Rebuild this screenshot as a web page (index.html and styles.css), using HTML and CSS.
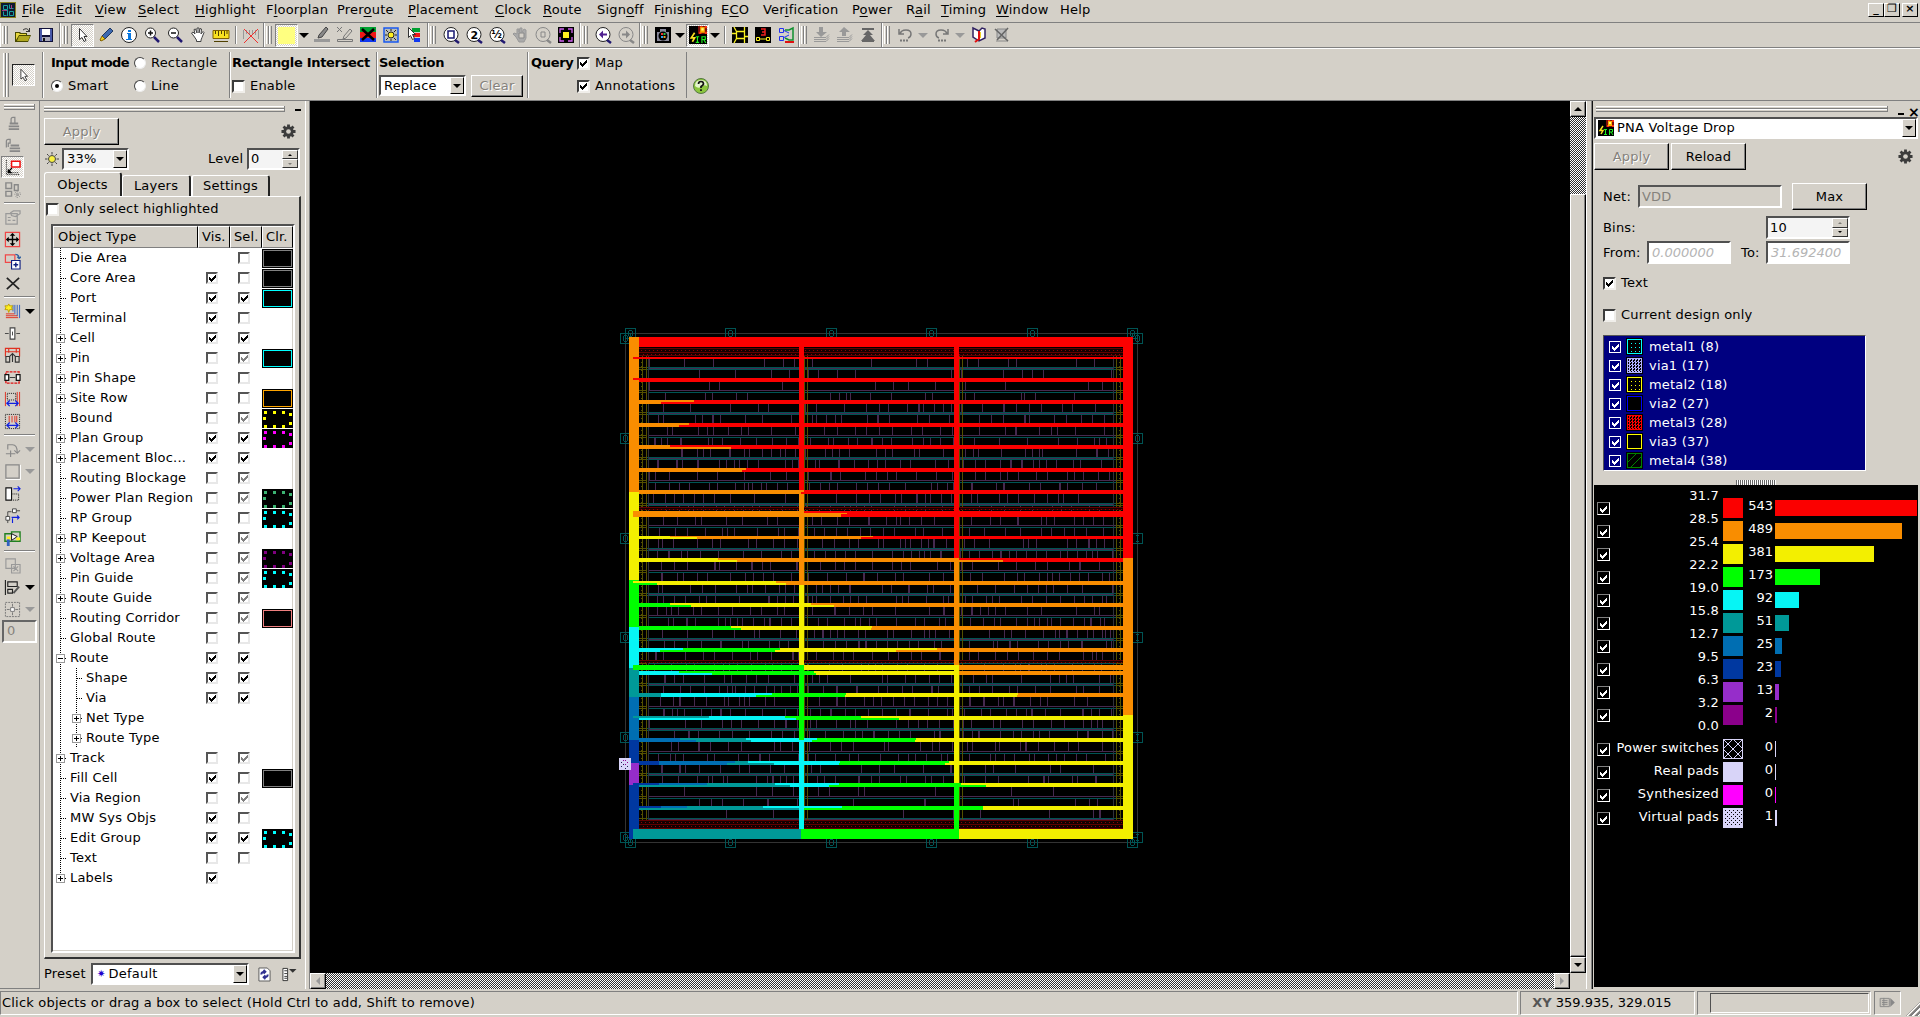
FILE: index.html
```html
<!DOCTYPE html>
<html lang="en">
<head>
<meta charset="utf-8">
<title>Layout Window</title>
<link rel="stylesheet" href="styles.css">
</head>
<body>
<svg class="sprite" width="0" height="0">
  <symbol id="app" viewBox="0 0 16 16"><path fill="#8a8420" d="M0 0h16v16H0z"/><path fill="#101830" d="M1 1h14v14H1z"/><path fill="none" stroke="#18a0a0" d="M3.500 3.500h4v4h-4zM9.500 2.500v4h4M9.500 9.500h4v4h-4zM3.500 9.500v4h3M7.500 8v6"/><path stroke="#a04080" d="M2 8.500h5M11.500 3v4"/></symbol>
  <symbol id="open" viewBox="0 0 18 18"><path fill="#4a4a00" d="M1 6h5l1 1h6v2h4l-3 7H1z"/><path fill="#e8d840" d="M2 7h3l1 1h6v1H5l-3 5z"/><path fill="#b0a820" d="M5 10h11l-2 5H3z"/><path fill="none" stroke="#333" d="M9 4q4-3 6 1M15.500 2v4M12 5.500h4"/></symbol>
  <symbol id="save" viewBox="0 0 18 18"><path fill="#111138" d="M2 2h14v14H2z"/><path fill="#4858a8" d="M3 3h2v12H3zM13 3h2v12h-2z"/><path fill="#fff" d="M5 3h8v6H5z"/><path fill="#a8a8b8" d="M5 11h8v4H5z"/><path fill="#111" d="M6 12h2v3H6z"/></symbol>
  <symbol id="cursor" viewBox="0 0 18 18"><path fill="#fff" stroke="#333" d="M5.500 2.500v11l2.500-2 2 4 2-1-2-4h3z"/></symbol>
  <symbol id="pencil" viewBox="0 0 18 18"><path fill="#3c68b0" stroke="#203860" d="M13 2l3 3-8 8-3-3z"/><path fill="#f0d020" stroke="#806000" d="M5 10l3 3-4 2-1-1z"/></symbol>
  <symbol id="info" viewBox="0 0 18 18"><circle cx="9" cy="9" r="7.500" fill="#fff" stroke="#222"/><path fill="#0878e0" d="M8 4h3v2H8zM7 7h4v6h1v1H6v-1h2V8H7z"/></symbol>
  <symbol id="zin" viewBox="0 0 18 18"><circle cx="7.500" cy="7" r="5" fill="#fff" stroke="#222"/><path stroke="#201870" stroke-width="2.500" d="M11 11l5 5"/><path stroke="#111" stroke-width="1.500" d="M5 7h5M7.500 4.500v5"/></symbol>
  <symbol id="zout" viewBox="0 0 18 18"><circle cx="7.500" cy="7" r="5" fill="#fff" stroke="#222"/><path stroke="#201870" stroke-width="2.500" d="M11 11l5 5"/><path stroke="#111" stroke-width="1.500" d="M5 7h5"/></symbol>
  <symbol id="hand" viewBox="0 0 18 18"><path fill="#fff" stroke="#444" d="M5.500 11l-3-4 1.500-1 2 2-1-4.500 1.500-.5 1.500 4V2h2v5l1-4.500 1.500.5-.5 5 2-2.500 1 1-2 5-1 2.500v1.500H7.500v-1.500z"/></symbol>
  <symbol id="ruler" viewBox="0 0 18 18"><path fill="#f8e020" stroke="#806000" d="M1 4.500h16v8H1z"/><path stroke="#504000" d="M3.500 5v3M6.500 5v5M9.500 5v3M12.500 5v5M15 5v3M2 15.500h14"/></symbol>
  <symbol id="noruler" viewBox="0 0 18 18"><path fill="none" stroke="#999" d="M1.500 13V4M4.500 4v4M7.500 4v5M10.500 4v4M13.500 4v5M16.500 4v9"/><path stroke="#f03030" d="M2 3l14 14M16 3L2 17"/></symbol>
  <symbol id="gpen" viewBox="0 0 18 18"><path fill="#888" stroke="#444" d="M13 1l2 2-6 8-4 1 1-3z"/><path fill="#999" d="M1 13h16v3H1z"/></symbol>
  <symbol id="xpen" viewBox="0 0 18 18"><path fill="none" stroke="#777" d="M14 3l2 2-6 7-3 1 1-3zM1.500 13.500h15v2h-15zM1 1l5 5M6 1L1 6"/></symbol>
  <symbol id="redx" viewBox="0 0 18 18"><path fill="#00a030" d="M1 1h16v5H1z"/><path fill="#f01818" d="M1 6h16v6H1z"/><path fill="#1038f0" d="M1 12h16v4H1z"/><path stroke="#000" stroke-width="2.500" d="M3 3l12 11M15 3L3 14"/></symbol>
  <symbol id="bluesun" viewBox="0 0 18 18"><path fill="#b8bcb8" stroke="#1858f0" stroke-width="1.500" d="M2 2h14v14H2z"/><circle cx="9" cy="9" r="3" fill="#fff020" stroke="#222"/><path stroke="#222" d="M9 3v2M9 13v2M3 9h2M13 9h2M4 4l2 2M12 12l2 2M14 4l-2 2M4 14l2-2"/></symbol>
  <symbol id="rgbcur" viewBox="0 0 18 18"><path fill="#00a030" d="M7 2h8v4H7z"/><path fill="#f01818" d="M8 7h7v4H8z"/><path fill="#1038f0" d="M9 12h6v4H9z"/><path fill="#fff" stroke="#333" d="M3.500 1.500v10l2-2 2 4 2-1-2-4h3z"/></symbol>
  <symbol id="camera" viewBox="0 0 18 18"><path d="M1 1h16v16H1z"/><path fill="#889" d="M3 6h12v9H3zM6 3h6v3H6z"/><circle cx="9" cy="10" r="4.500"/><path fill="#f03030" d="M7 7h2v2H7z"/><path fill="#30c040" d="M9.500 7h2v2h-2z"/><path fill="#30a0f0" d="M7 10h2v2H7z"/><path fill="#f0a020" d="M9.500 10h2v2h-2z"/></symbol>
  <symbol id="ir" viewBox="0 0 16 16"><path d="M0 0h16v16H0z"/><path fill="#801008" d="M8 0h8v7H8z"/><path fill="#f83010" d="M10 0h2v2h-2zM14 0h2v2h-2zM9 5h2v2H9zM14 5h2v2h-2z"/><path fill="#ffb000" d="M10 1h4v5h-4z"/><path fill="#ffff80" d="M11 2h2v2h-2z"/><path fill="none" stroke="#f8e020" stroke-width="1.500" d="M5 6L2 10.500h3L3 14"/><path fill="none" stroke="#20f020" d="M6 9.500h3M7.500 9v6M6 14.500h3M11.500 15V9.500h3v2.500h-3M13 12l2 3"/></symbol>
  <symbol id="ychip" viewBox="0 0 18 18"><path d="M1 1h16v16H1z"/><path fill="none" stroke="#f8f020" stroke-width="1.300" d="M5.500 5.500h8v7h-8zM5.500 5.500L3 1M13.500 5.500V1M5.500 12.500L3 17M13.500 12.500V17M1 7.500h4M14 10.500h3M8 5.500h4"/></symbol>
  <symbol id="three" viewBox="0 0 18 18"><path d="M1 1h16v16H1z"/><path fill="none" stroke="#f02020" stroke-width="1.500" d="M7 3h4v6H7M8 6h3"/><path fill="none" stroke="#f8f020" d="M2.500 11.500h3v3h-3zM12.500 11.500h3v3h-3zM6 13h6"/></symbol>
  <symbol id="schem" viewBox="0 0 18 18"><path fill="none" stroke="#2030f0" d="M2.500 2.500h4v4h-4zM2.500 10.500h4v4h-4zM6 4l6 3M6 12l6-3"/><path fill="none" stroke="#109030" stroke-width="1.500" d="M8 4h4l4-2v12h-4L8 12"/><path fill="#e01010" d="M8 15h9v2H8z"/></symbol>
  <symbol id="down" viewBox="0 0 18 18"><path fill="#999" d="M6 1h4v5h4L8 11 3 6h3z"/><path stroke="#999" fill="none" d="M1 11.500h12l3-3M1 13.500h12l3-3M1 15.500h12l3-3"/></symbol>
  <symbol id="up" viewBox="0 0 18 18"><path fill="#999" d="M6 10h4V6h4L8 1 3 6h3z"/><path stroke="#999" fill="none" d="M1 11.500h12l3-3M1 13.500h12l3-3M1 15.500h12l3-3"/></symbol>
  <symbol id="top" viewBox="0 0 18 18"><path fill="#666" d="M3 2h12v2H3zM9 4l5 5h-3l5 6H2l5-6H4zM3 14h12v2H3z"/></symbol>
  <symbol id="undo" viewBox="0 0 18 18"><path fill="none" stroke="#777" stroke-width="1.500" d="M4 8q1-4 6-4t5 4q0 3-3 4M3 3v5h5"/><path stroke="#777" stroke-width="2" stroke-dasharray="2 1" d="M4 14.500h9"/></symbol>
  <symbol id="redo" viewBox="0 0 18 18"><path fill="none" stroke="#777" stroke-width="1.500" d="M14 8q-1-4-6-4T3 8q0 3 3 4M15 3v5h-5"/><path stroke="#777" stroke-width="2" stroke-dasharray="2 1" d="M5 14.500h9"/></symbol>
  <symbol id="book" viewBox="0 0 18 18"><path fill="#fff" stroke="#302060" stroke-width="1.500" d="M9 5L3 2v9l6 4 6-3V3l-3-1z"/><path stroke="#e01010" stroke-width="2" fill="none" d="M9 5v9M5 16l4-3"/><path stroke="#f0d020" d="M10.500 6v6"/></symbol>
  <symbol id="nobook" viewBox="0 0 18 18"><path fill="#bbb" stroke="#888" d="M4 3h9v9H4zM3 15h12"/><path stroke="#666" stroke-width="1.600" d="M2 3l13 12M15 2L4 14"/></symbol>
  <symbol id="help" viewBox="0 0 16 16"><circle cx="8" cy="8" r="7.500" fill="#8cc63e" stroke="#557744"/><path fill="#e4f4cc" d="M2 8Q2 2 8 2t6 6q-3-2-6 1-3 2-6-1z"/><path fill="none" stroke="#111" stroke-width="1.700" d="M5.500 6q0-2.500 2.500-2.500T10.500 6Q10 7.500 8 8.500V10M8 11.200v1.800"/></symbol>
  <symbol id="gear" viewBox="0 0 16 16"><path stroke="#3c3c3c" stroke-width="3" d="M8 .5v15M.5 8h15M2.700 2.700l10.600 10.600M13.300 2.700L2.700 13.300"/><circle cx="8" cy="8" r="5.500" fill="#3c3c3c"/><circle cx="8" cy="8" r="2.500" fill="#d4d0c8"/></symbol>
  <symbol id="sun" viewBox="0 0 16 16"><circle cx="8" cy="8" r="3.500" fill="#f8f040" stroke="#444"/><path stroke="#444" d="M8 1v2.500M8 12.500V15M1 8h2.500M12.500 8H15M3 3l1.700 1.700M11.300 11.300L13 13M13 3l-1.700 1.700M3 13l1.700-1.700"/></symbol>
  <symbol id="lock" viewBox="0 0 18 18"><path fill="none" stroke="#888" stroke-width="1.300" d="M7.500 9V4.500q0-2 2-2h2v6"/><path fill="#888" d="M6 8h9v2H6zM5 11h11v2H5zM5 14h11v2H5z"/></symbol>
  <symbol id="unlock" viewBox="0 0 18 18"><path fill="none" stroke="#888" stroke-width="1.300" d="M2.500 11V4.500q0-2 2-2h2v4h-2v4"/><path fill="#888" d="M7 8h9v2H7zM6 11h11v2H6zM6 14h11v2H6z"/></symbol>
  <symbol id="redrect" viewBox="0 0 18 18"><path fill="#fff" stroke="#f01010" stroke-width="1.600" d="M8 2.500h9v6H8z"/><path d="M4 10v5h5z"/><path stroke="#000" stroke-width="1.300" d="M4 14l4.500-4.500"/><path fill="none" stroke="#000" stroke-dasharray="1 1" d="M2.500 1v15.500H17M4 14.500h12"/></symbol>
  <symbol id="boxes" viewBox="0 0 18 18"><path fill="none" stroke="#888" stroke-width="1.500" d="M2 2h6v6H2zM2 11h6v5H2zM11 4h4v6h-4z"/><path stroke="#888" stroke-dasharray="1 1" d="M11 14h7M14 11v7M12 12l5 5M17 12l-5 5"/></symbol>
  <symbol id="props" viewBox="0 0 18 18"><path fill="none" stroke="#999" stroke-width="1.300" d="M2 5h12v11H2zM4 9h3M4 12h3M9 12h3M7 4l3-2h7v3l-5 3-4-1z"/></symbol>
  <symbol id="move" viewBox="0 0 18 18"><path fill="none" stroke="#f04848" stroke-width="1.300" d="M1.500 1.500h15v15h-15z"/><path d="M9 2l3 3H6zM9 16l3-3H6zM2 9l3-3v6zM16 9l-3-3v6z"/><path stroke="#000" stroke-width="1.500" d="M9 3v12M3 9h12"/></symbol>
  <symbol id="copy" viewBox="0 0 18 18"><path fill="none" stroke="#f04848" stroke-width="1.300" d="M1.500 2h10v8h-10z"/><path fill="none" stroke="#3060a0" stroke-width="1.300" d="M12 1.500q4 0 4 4.500M14 4l2 2 2-2"/><path fill="#fff" stroke="#102080" stroke-width="1.200" d="M8 8h9v9H8z"/><path stroke="#102080" stroke-width="1.500" d="M10 12.500h5M12.500 10v5"/></symbol>
  <symbol id="del" viewBox="0 0 18 18"><path stroke="#222" stroke-width="1.800" d="M3 3l13 12M16 3L3 15"/></symbol>
  <symbol id="routes" viewBox="0 0 18 18"><path fill="none" stroke="#3060c0" d="M16.500 2v14M14 2v12M11.500 2v10M9.500 2v7"/><path fill="none" stroke="#e03020" d="M2 11.500h9M2 13.500h12M2 15.500h13"/><path fill="#fff020" stroke="#c0a000" d="M5 1l1 2 3 0-1 2 1 2-3 0-1 3-1-3-3 0 1-2-1-2 3 0z"/></symbol>
  <symbol id="stretch" viewBox="0 0 18 18"><path fill="#fff" stroke="#444" stroke-width="1.200" d="M6.500 3h5v12h-5z"/><path stroke="#444" fill="none" d="M1 9h4M13 9h4M9 7v4"/></symbol>
  <symbol id="arch" viewBox="0 0 18 18"><path fill="none" stroke="#e03020" stroke-width="1.200" d="M1.500 10V1.500h15V10M1 5h16M5 1v5M13 1v5"/><path fill="none" stroke="#333" stroke-width="1.200" d="M2 10h4v6H2zM12 10h4v6h-4zM9 16V8M6 10l3-3 3 3"/></symbol>
  <symbol id="pull" viewBox="0 0 18 18"><path fill="none" stroke="#e01010" stroke-width="1.400" stroke-dasharray="3 1" d="M2 3h14v12H2z"/><path fill="#fff" stroke="#111" stroke-width="1.300" d="M1 6h4v6H1zM13 6h4v6h-4z"/><path stroke="#333" d="M6 9h6"/></symbol>
  <symbol id="widthb" viewBox="0 0 18 18"><path stroke="#e03020" d="M1.500 1v15M14 1v15M16.500 1v15"/><path fill="none" stroke="#111" stroke-dasharray="1 1" d="M3.500 2.500h9v7h-9z"/><path fill="none" stroke="#1020e0" stroke-width="1.300" d="M3 13h12M6 10l-3 3 3 3M12 10l3 3-3 3"/></symbol>
  <symbol id="widthr" viewBox="0 0 18 18"><path stroke="#e03020" d="M5.500 3v7M8.500 3v7M11.500 3v7M13.500 3v7"/><path fill="none" stroke="#111" stroke-dasharray="1 1" d="M1.500 1.500h15v15h-15z"/><path fill="none" stroke="#1020e0" stroke-width="1.300" d="M3 13h12M6 10l-3 3 3 3M12 10l3 3-3 3"/></symbol>
  <symbol id="rot" viewBox="0 0 18 18"><path fill="none" stroke="#888" stroke-width="1.200" d="M4 9V4h5q5 0 5 8M11 10l3 3 3-3M2 13.500h10M7 10v7"/></symbol>
  <symbol id="blank" viewBox="0 0 18 18"><path fill="none" stroke="#888" stroke-width="1.300" d="M2 2h14v14H2z"/><path fill="none" stroke="#fff" d="M17.500 2v15.500H2"/></symbol>
  <symbol id="shift" viewBox="0 0 18 18"><path fill="#fff" stroke="#111" stroke-width="1.200" d="M2 3h6v13H2z"/><path fill="none" stroke="#111" stroke-dasharray="1 1" d="M9 9.500h6.500v6.500H9"/><path fill="none" stroke="#1020e0" stroke-width="1.200" d="M10 4h7M14.500 1.500L17 4l-2.500 2.500"/></symbol>
  <symbol id="pins" viewBox="0 0 18 18"><path fill="#fff" stroke="#444" d="M2 10h4v4H2zM9 2h4v4H9z"/><path fill="none" stroke="#444" d="M4 10V5h4M13 4h4M4 14v3"/><path fill="none" stroke="#1020e0" stroke-width="1.200" d="M8 11h8M14 9l2 2-2 2M9 17v-5"/></symbol>
  <symbol id="net" viewBox="0 0 18 18"><path fill="none" stroke="#208020" stroke-width="1.500" d="M1 5h7V3h9v10H1z"/><path fill="#fff" stroke="#111" d="M8 5l6 3-6 4z"/><path fill="#fff020" d="M3 8h4v3H3zM13 9h4v3h-4z"/><path fill="#3060c0" d="M3 11h3v7H3z"/></symbol>
  <symbol id="group" viewBox="0 0 18 18"><path fill="none" stroke="#999" stroke-width="1.200" d="M2 2h10v10H2zM8 8h9v9H8zM10 10l5 5M15 10l-5 5"/></symbol>
  <symbol id="align" viewBox="0 0 18 18"><path fill="none" stroke="#222" stroke-width="1.200" d="M1.500 1v16M4 3h10v5H4zM4 11h5v4H4z"/><path fill="none" stroke="#555" stroke-width="2" d="M10 15l6-7"/></symbol>
  <symbol id="spread" viewBox="0 0 18 18"><path fill="none" stroke="#777" stroke-dasharray="2 1" d="M1.500 1.500h15v15h-15z"/><path fill="#fff" stroke="#777" d="M7 7h4v4H7z"/><path stroke="#777" d="M9 3v3M9 12v3M3 9h3M12 9h3"/></symbol>
  <symbol id="fit" viewBox="0 0 18 18"><path d="M1 1h16v16H1z"/><path fill="#fff020" d="M6 6h6v6H6z"/><path fill="none" stroke="#d060f0" stroke-width="1.300" d="M3 7V3h4M11 3h4v4M15 11v4h-4M7 15H3v-4"/></symbol>
  <symbol id="refresh" viewBox="0 0 14 16"><path fill="#fff" stroke="#555" d="M1 1h9l3 3v11H1z"/><path fill="none" stroke="#303090" stroke-width="2" d="M3.500 8q0-3 4-3M10.500 8q0 3-4 3M6 3l2 2-2 2M8 9l-2 2 2 2"/></symbol>
  <symbol id="preset" viewBox="0 0 16 16"><path fill="#fff" stroke="#333" d="M1.500 1.500h5v13h-5zM3 4h3M3 7h3M3 10h3M3 12h3"/><path fill="#333" d="M8 2h8l-4 4z"/></symbol>
  <symbol id="go" viewBox="0 0 18 12"><path fill="#c8c4bc" stroke="#888" d="M1 1.500h10v9H1zM3 4h6M3 6h6M3 8h6M5 1v9"/><path fill="#888" d="M12 1l5 5-5 5z"/></symbol>
</svg>

<div class="window">
  <nav class="menubar">
    <svg class="app-icon"><use href="#app"/></svg>
    <span><u>F</u>ile</span><span><u>E</u>dit</span><span><u>V</u>iew</span><span><u>S</u>elect</span><span><u>H</u>ighlight</span><span>F<u>l</u>oorplan</span><span>Prer<u>o</u>ute</span><span><u>P</u>lacement</span><span><u>C</u>lock</span><span><u>R</u>oute</span><span>Sign<u>o</u>ff</span><span>F<u>i</u>nishing</span><span>E<u>C</u>O</span><span>Ver<u>i</u>fication</span><span>P<u>o</u>wer</span><span>R<u>a</u>il</span><span><u>T</u>iming</span><span><u>W</u>indow</span><span>Help</span>
    <div class="wm"><b>_</b><b>❐</b><b>×</b></div>
  </nav>

  <div class="toolbars" id="toolbars"></div>

  <div class="options">
    <div class="grip-v tall"></div>
    <div class="mode-btn hatch"><svg><use href="#cursor"/></svg></div>
    <div class="opt-group g-mode">
      <b>Input mode</b><label><i class="radio"></i>Rectangle</label>
      <label><i class="radio on"></i>Smart</label><label><i class="radio"></i>Line</label>
    </div>
    <div class="opt-group g-rect">
      <b>Rectangle Intersect</b>
      <label><i class="cb"></i>Enable</label>
    </div>
    <div class="opt-group g-sel">
      <b>Selection</b>
      <div class="sel-row"><div class="combo"><span>Replace</span><i class="drop"></i></div><div class="btn off">Clear</div></div>
    </div>
    <div class="opt-group g-query">
      <b>Query</b><label><i class="cb on"></i>Map</label>
      <span></span><label><i class="cb on"></i>Annotations</label>
    </div>
    <svg class="help"><use href="#help"/></svg>
  </div>

  <div class="main">
    <div class="side-tools" id="side"></div>

    <section class="objects">
      <div class="dock-head"><div class="grip-h"></div><b class="min"></b></div>
      <div class="apply-row"><div class="btn off">Apply</div><svg class="gear"><use href="#gear"/></svg></div>
      <div class="level-row">
        <svg class="sun"><use href="#sun"/></svg>
        <div class="combo dim"><span>33%</span><i class="drop"></i></div>
        <span class="lvl">Level</span>
        <div class="spin"><span>0</span><div class="arrows"><i></i><i class="dis"></i></div></div>
      </div>
      <div class="tabs"><div class="tab on">Objects</div><div class="tab">Layers</div><div class="tab t3">Settings</div></div>
      <div class="tab-page">
        <label class="only"><i class="cb"></i>Only select highlighted</label>
        <div class="tree">
          <div class="tree-head"><span>Object Type</span><span>Vis.</span><span>Sel.</span><span>Clr.</span></div>
          <div id="tree"></div>
        </div>
      </div>
      <div class="preset-row">
        <span>Preset</span>
        <div class="combo"><em>✷</em><span>Default</span><i class="drop"></i></div>
        <svg class="ref"><use href="#refresh"/></svg><svg class="pre"><use href="#preset"/></svg>
      </div>
    </section>

    <section class="view">
      <svg class="canvas" id="chip" viewBox="310 101 1260 872" shape-rendering="crispEdges"></svg>
      <div class="vscroll hatch-d"><div class="sb up"></div><div class="thumb"></div><div class="sb dn"></div></div>
      <div class="hscroll hatch-d"><div class="sb lf"></div><div class="sb rt"></div></div>
      <div class="corner"></div>
    </section>

    <section class="pna">
      <div class="dock-head"><div class="grip-h"></div><b class="min"></b><b class="cls">×</b></div>
      <div class="combo map-combo"><svg><use href="#ir"/></svg><span>PNA Voltage Drop</span><i class="drop"></i></div>
      <div class="btn-row"><div class="btn off">Apply</div><div class="btn">Reload</div><svg class="gear"><use href="#gear"/></svg></div>
      <div class="form">
        <div class="row net"><span>Net:</span><div class="field off">VDD</div><div class="btn">Max</div></div>
        <div class="row bins"><span>Bins:</span><div class="spin"><span>10</span><div class="arrows"><i class="dis"></i><i></i></div></div></div>
        <div class="row range"><span>From:</span><div class="field ghost">0.000000</div><span class="to">To:</span><div class="field ghost">31.692400</div></div>
        <label class="ck1"><i class="cb on"></i>Text</label>
        <label class="ck2"><i class="cb"></i>Current design only</label>
        <div class="layers" id="layers"></div>
      </div>
      <div class="split"></div>
      <div class="hist" id="hist"></div>
    </section>
  </div>

  <footer class="status">
    <div class="msg">Click objects or drag a box to select (Hold Ctrl to add, Shift to remove)</div>
    <div class="xy"><b>XY</b> 359.935, 329.015</div>
    <div class="prog"><div></div></div>
    <div class="gobtn"><svg><use href="#go"/></svg></div>
    <div class="sizegrip"></div>
  </footer>
</div>
<script src="app.js"></script>
</body>
</html>
```
FILE: styles.css
```css
* { box-sizing: border-box; }
body { margin: 0; background: #d4d0c8; color: #000; font: 13px/16px "DejaVu Sans", sans-serif; letter-spacing: .2px; overflow: hidden; }
svg { display: block; flex: none; overflow: visible; }
.sprite { position: absolute; }
.window { width: 1920px; height: 1017px; display: flex; flex-direction: column; white-space: nowrap; }

.menubar { height: 22px; display: grid; align-items: center; grid-template-columns: 22px 34px 39px 43px 57px 71px 71px 71px 87px 48px 54px 57px 67px 42px 89px 54px 35px 55px 64px 1fr auto; padding-bottom: 2px; }
.menubar u { text-underline-offset: 2px; text-decoration-thickness: 1px; }
.app-icon { width: 16px; height: 16px; }
.wm { display: flex; padding-right: 2px; }
.wm b { width: 16px; height: 14px; font-size: 11px; line-height: 10px; text-align: center; border: 1px solid; border-color: #fff #000 #000 #fff; }
.wm b:last-child { margin-left: 2px; }

.toolbars { height: 26px; display: flex; border-top: 1px solid #808080; border-bottom: 1px solid #808080; }
.bar { display: flex; align-items: center; border-right: 1px solid #808080; border-left: 1px solid #fff; flex: none; }
.bar:last-child { border-right: 0; }
.grip-v { width: 6px; height: 18px; flex: none; margin: 0 3px 0 1px; background: linear-gradient(90deg, #fff 1px, #d4d0c8 1px 2px, #808080 2px 3px, #fff 3px 4px, #d4d0c8 4px 5px, #808080 5px); }
.tool { width: 23px; height: 23px; display: grid; place-items: center; flex: none; }
.tool svg { width: 18px; height: 18px; }
.tool.pressed { border: 1px solid; border-color: #808080 #fff #fff #808080; }
.hatch, .tool.pressed { background: repeating-conic-gradient(#fff 0 25%, #d4d0c8 0 50%) 0 0 / 2px 2px; }
.swatch { width: 17px; height: 17px; background: #ffff80; }
.arrow { width: 12px; display: grid; place-items: center; flex: none; }
.arrow::before { content: ""; border: 5px solid transparent; border-top-color: #000; border-bottom: 0; }
.arrow.dis::before { border-top-color: #999; }
.arrow.wide { width: 14px; }
.vsep { width: 7px; height: 18px; flex: none; background: linear-gradient(90deg, transparent 3px, #808080 3px 4px, #fff 4px 5px, transparent 5px); }

.options { height: 53px; display: flex; align-items: center; border-top: 1px solid #fff; border-bottom: 1px solid #808080; padding-left: 2px; }
.grip-v.tall { height: 44px; }
.mode-btn { width: 23px; height: 22px; border: 1px solid; border-color: #222 #fff #fff #222; display: grid; place-items: center; }
.mode-btn svg { width: 16px; height: 16px; }
.opt-group { height: 46px; display: grid; grid-template-rows: 23px 23px; align-items: center; border-left: 1px solid #808080; box-shadow: inset 1px 0 #fff; padding-left: 3px; }
.opt-group b { letter-spacing: -.32px; }
.opt-group.g-mode b { letter-spacing: -.6px; }
.g-mode { margin-left: 7px; padding-left: 8px; width: 187px; grid-template-columns: 83px 1fr; }
.opt-group.g-rect { width: 147px; padding-left: 2px; }
.opt-group.g-sel { width: 151px; padding-left: 2px; }
.g-query { width: 160px; grid-template-columns: 46px 1fr; border-right: 1px solid #808080; }
.sel-row { display: flex; gap: 5px; }
.sel-row .combo { width: 87px; height: 21px; }
.sel-row .btn { width: 52px; height: 22px; }
.help { width: 16px; height: 16px; margin: 22px 0 0 6px; }
label { display: flex; align-items: center; gap: 5px; }
.radio { width: 12px; height: 12px; border-radius: 50%; background: #fff; border: 1.500px solid; border-color: #444 #eee #eee #444; display: grid; place-items: center; }
.radio.on::before { content: ""; width: 4px; height: 4px; border-radius: 50%; background: #000; }
.cb { width: 13px; height: 13px; flex: none; background: #fff; border: 2px solid; border-color: #3c3c3c #f0eeea #f0eeea #3c3c3c; display: grid; place-items: center; }
.cb svg, .list-cb svg { width: 9px; height: 8px; }

.btn { display: grid; place-items: center; border: 1px solid; border-color: #fff #000 #000 #fff; box-shadow: inset -1px -1px #808080; }
.btn.off, .off { color: #85827c; }
.btn.off { text-shadow: 1px 1px #fff; }
.combo, .field, .spin { display: flex; align-items: center; background: #fff; border: 2px solid; border-color: #505050 #fff #fff #505050; }
.combo span { flex: 1; padding-left: 3px; }
.drop { width: 14px; align-self: stretch; background: #d4d0c8; border: 1px solid; border-color: #fff #000 #000 #fff; display: grid; place-items: center; }
.drop::before { content: ""; border: 4px solid transparent; border-top-color: #000; border-bottom: 0; }
.combo.dim, .spin { background: #f4f4f4; }
.spin { justify-content: space-between; padding-left: 3px; }
.arrows { width: 16px; align-self: stretch; display: flex; flex-direction: column; }
.arrows i { flex: 1; background: #d4d0c8; border: 1px solid; border-color: #fff #333 #333 #fff; display: grid; place-items: center; }
.arrows i::before { content: ""; border: 2px solid transparent; border-bottom-color: #000; border-top: 0; }
.arrows i + i::before { border-top: 2px solid #000; border-bottom: 0; }
.arrows .dis::before { opacity: .4; }

.main { height: 888px; display: flex; }
.main > * { flex: none; }
.side-tools { width: 40px; border-right: 1px solid #808080; border-bottom: 1px solid #808080; padding-top: 3px; }
.grip-h { height: 6px; flex: 1; background: linear-gradient(#fff 1px, #d4d0c8 1px 2px, #808080 2px 3px, #fff 3px 4px, #d4d0c8 4px 5px, #808080 5px); border-right: 1px solid #808080; }
.side-tools .grip-h { margin: 0 4px 2px; }
.st-row { height: 22px; display: flex; align-items: center; padding-left: 1px; }
.st-row .tool { height: 22px; }
.st-row .tool svg { width: 17px; height: 17px; }
.hsep { height: 2px; margin: 2px 4px; background: linear-gradient(#808080 50%, #fff 50%); }
.side-in { width: 35px; height: 23px; margin: 0 0 0 2px; border: 2px solid; border-color: #666 #fff #fff #666; padding: 1px 3px; color: #85827c; }

.objects { width: 270px; padding: 0 0 0 4px; border-right: 1px solid #808080; display: flex; flex-direction: column; box-shadow: inset -3px 0 #d4d0c8, inset -4px 0 #fff; }
.dock-head { height: 17px; display: flex; align-items: flex-start; padding-top: 5px; }
.dock-head .min { width: 6px; height: 2px; background: #000; margin: 3px 8px 0 10px; }
.objects .grip-h { flex: 0 0 241px; }
.apply-row { height: 30px; display: flex; justify-content: space-between; padding-right: 13px; }
.apply-row .btn, .btn-row .btn { width: 75px; height: 27px; }
.gear { width: 15px; height: 15px; margin-top: 6px; }
.level-row { height: 22px; display: flex; align-items: center; }
.sun { width: 16px; height: 16px; margin-right: 2px; }
.level-row .combo { width: 67px; height: 22px; }
.lvl { margin-left: 79px; width: 39px; }
.level-row .spin { width: 53px; height: 22px; padding-left: 2px; }
.tabs { height: 25px; display: flex; align-items: flex-end; margin-top: 1px; }
.tab { height: 21px; border: solid; border-width: 1px 2px 0 1px; border-color: #fff #222 #222 #fff; border-radius: 3px 3px 0 0; width: 69px; display: grid; place-items: center; }
.tab.on { height: 25px; width: 78px; margin-bottom: -1px; background: #d4d0c8; }
.tab.t3 { width: 79px; border-left-width: 2px; }
.tab-page { width: 257px; height: 763px; border: solid; border-width: 1px 2px 2px 1px; border-color: #fff #333 #333 #fff; padding: 5px 0 0 1px; }
.only { height: 14px; }
.tree { margin: 8px 0 0 5px; width: 244px; height: 729px; background: #fff; border: 2px solid; border-color: #505050 #fff #fff #505050; box-shadow: inset -1px -1px #d4d0c8; }
.tree-head { display: grid; grid-template-columns: 145px 32px 32px 31px; height: 22px; background: #d4d0c8; }
.tree-head span { border: 1px solid; border-color: #fff #000 #808080 #fff; padding: 2px 0 0 3px; overflow: hidden; letter-spacing: .1px; }
.tree-head span:first-child { padding-left: 4px; letter-spacing: .2px; }
.node { height: 20px; display: grid; grid-template-columns: 145px 32px 32px 31px; position: relative; align-items: center; }
.node .name { padding-left: 17px; height: 20px; line-height: 19px; background: repeating-linear-gradient(#000 0 1px, transparent 1px 2px) 7px 0 / 1px 20px no-repeat, repeating-linear-gradient(90deg, #000 0 1px, transparent 1px 2px) 8px 10px / 6px 1px no-repeat; }
.node.last .name { background-size: 1px 12px, 6px 1px; }
.node.kid .name { padding-left: 33px; background: repeating-linear-gradient(#000 0 1px, transparent 1px 2px) 7px 0 / 1px 20px no-repeat, repeating-linear-gradient(#000 0 1px, transparent 1px 2px) 23px 0 / 1px 20px no-repeat, repeating-linear-gradient(90deg, #000 0 1px, transparent 1px 2px) 24px 10px / 6px 1px no-repeat; }
.exp { position: absolute; left: 3px; top: 6px; width: 9px; height: 9px; background: linear-gradient(#000, #000) 1px 3px / 5px 1px no-repeat #fff; border: 1px solid #999; }
.exp.plus { background: linear-gradient(#000, #000) 1px 3px / 5px 1px no-repeat, linear-gradient(#000, #000) 3px 1px / 1px 5px no-repeat #fff; }
.kid .exp { left: 19px; }
.node .cb { width: 12px; height: 12px; margin-left: 8px; border-color: #555 #e8e8e8 #e8e8e8 #555; }
.clr { width: 31px; height: 19px; background: #000; margin-top: 1px; display: grid; place-items: center; color: var(--c); }
.clr.solid::before { content: ""; width: 27px; height: 15px; border: 1px solid var(--c); }
.clr.dash::before { content: ""; width: 31px; height: 19px; background: repeating-linear-gradient(90deg, var(--c) 0 3px, transparent 3px 9px) 2px 2px / 21px 3px no-repeat, repeating-linear-gradient(90deg, var(--c) 0 3px, transparent 3px 9px) 2px 16px / 21px 3px no-repeat, linear-gradient(var(--c), var(--c)) 1px 8px / 3px 3px no-repeat, linear-gradient(var(--c), var(--c)) 27px 4px / 3px 3px no-repeat, linear-gradient(var(--c), var(--c)) 27px 13px / 3px 3px no-repeat; }
.preset-row { display: flex; align-items: center; height: 22px; margin-top: 4px; }
.preset-row > span { width: 47px; }
.preset-row .combo { width: 158px; height: 22px; }
.preset-row em { color: #20c; font-style: normal; font-size: 10px; padding-left: 4px; }
.ref { width: 13px; height: 15px; margin-left: 9px; }
.pre { width: 16px; height: 15px; margin-left: 10px; }

.view { width: 1276px; display: grid; grid-template: 872px 16px / 1260px 16px; background: #d4d0c8; }
.canvas { width: 1260px; height: 872px; background: #000; }
.hatch-d { background: repeating-conic-gradient(#fff 0 25%, #303030 0 50%) 0 0 / 2px 2px; display: flex; justify-content: space-between; }
.vscroll { flex-direction: column; }
.sb, .thumb { background: #d4d0c8; border: 1px solid; border-color: #fff #000 #000 #fff; box-shadow: inset -1px -1px #808080; width: 16px; height: 16px; display: grid; place-items: center; flex: none; }
.thumb { height: 763px; margin-top: 77px; }
.sb::before { content: ""; border: 4px solid transparent; }
.up::before { border-bottom-color: #000; border-top: 0; }
.dn::before { border-top-color: #000; border-bottom: 0; }
.lf::before { border-right-color: #999; border-left: 0; }
.rt::before { border-left-color: #999; border-right: 0; }

.pna { width: 334px; border-left: 1px solid #fff; padding: 0 2px 0 7px; box-shadow: inset 4px 0 #d4d0c8, inset 5px 0 #808080, inset 6px 0 #111; }
.pna .dock-head { height: 16px; padding-left: 2px; }
.pna .grip-h { flex: 0 0 292px; }
.pna .dock-head .min { margin: 7px 4px 0 10px; }
.cls { font: bold 14px/12px "DejaVu Sans", sans-serif; width: 9px; }
.map-combo { height: 22px; width: 324px; padding-left: 2px; }
.map-combo svg { width: 16px; height: 16px; }
.btn-row { display: flex; gap: 2px; margin-top: 4px; }
.btn-row .gear { margin-left: 150px; }
.form { padding-left: 9px; }
.row { display: flex; align-items: center; }
.net { margin-top: 13px; }
.net span { width: 35px; }
.field { height: 23px; padding-left: 2px; }
.net .field { width: 144px; background: #d4d0c8; border-color: #555 #fff #fff #555; }
.net .btn { width: 75px; height: 27px; margin-left: 10px; }
.bins { margin-top: 6px; }
.bins span:first-child { width: 163px; }
.bins .spin { width: 84px; height: 23px; padding-left: 2px; }
.bins .spin span { width: auto; }
.range { margin-top: 2px; }
.range span { width: 44px; }
.range .to { width: 35px; padding-left: 10px; }
.range .field { width: 84px; }
.field.ghost { color: #b4b4b4; font-style: italic; padding-left: 3px; letter-spacing: 0; }
.ck1 { margin-top: 11px; height: 16px; }
.ck2 { margin-top: 16px; height: 16px; }
.layers { margin-top: 12px; width: 263px; height: 136px; background: #000080; border: 1px solid; border-color: #555 #fff #fff #555; padding: 1px 0 0 5px; }
.layer { height: 19px; display: flex; align-items: center; color: #fff; }
.list-cb { width: 12px; height: 12px; border: 1px solid #fff; display: grid; place-items: center; margin-right: 6px; }
.layer .sw { width: 15px; height: 15px; border: 1px solid var(--c); margin-right: 7px; background-color: #000; outline: 1px solid #000; }
.p-dots { background-image: linear-gradient(90deg, #000 3px, transparent 3px), linear-gradient(#000 3px, var(--c) 3px); background-size: 4px 4px; }
.p-check { background-image: linear-gradient(90deg, var(--c) 1px, transparent 1px), linear-gradient(90deg, transparent 2px, var(--c) 2px 3px, transparent 3px); background-size: 4px 1px; -webkit-mask: none; background: repeating-conic-gradient(var(--c) 0 25%, #000 0 50%) 0 0 / 3px 3px; }
.p-diag { background-image: repeating-linear-gradient(135deg, transparent 0 5px, var(--c) 5px 6px); }
.split { height: 5px; width: 40px; margin: 9px 0 0 142px; background: repeating-linear-gradient(90deg, #666 0 1px, #fff 1px 2px); }
.hist { height: 502px; width: 324px; background: #000; color: #fff; padding-top: 13px; display: grid; grid-template-columns: 16px 113px 20px 32px 1fr; grid-auto-rows: 23px; align-content: start; }
.hist .cb { width: 13px; height: 13px; background: #000; border: 1px solid; border-color: #808080 #fff #fff #808080; margin: 4px 0 0 3px; }
.hist .edge { text-align: right; padding-right: 4px; margin-top: -10px; }
.hist .edge.lab { margin-top: 0; padding-top: 1px; }
.hist .sw { height: 20px; background: var(--c); }
.hist .n { text-align: right; padding-right: 2px; letter-spacing: 0; }
.hist .bar2 { height: 16px; margin: 2px 0 0 0; background: var(--c); }
.hist .gap { grid-column: 1 / -1; height: 11px; margin-bottom: -12px; }
.hist .zero { width: 129px; }
.hist .shift { margin-top: -12px; }
.hist .pads { grid-column: 1 / -1; margin-top: -12px; display: grid; grid-template-columns: subgrid; grid-auto-rows: 23px; height: 92px; }

.status { height: 28px; display: flex; align-items: flex-start; padding-top: 2px; gap: 2px; }
.status > div { height: 24px; border: 1px solid; border-color: #808080 #fff #fff #808080; }
.status .msg { width: 1519px; padding: 3px 1px; }
.status .xy { width: 175px; padding: 3px 11px; letter-spacing: 0; }
.xy b { color: #555; }
.status .prog { width: 174px; padding: 1px 1px 1px 12px; }
.prog div { height: 20px; border: 1px solid; border-color: #505050 #fff #fff #505050; }
.status .gobtn { width: 27px; margin-left: 1px; padding: 5px 4px; }
.gobtn svg { width: 17px; height: 11px; }
.status .sizegrip { width: 14px; height: 14px; border: 0; margin: 11px 0 0 3px; background: repeating-linear-gradient(135deg, #808080 0 2px, #fff 2px 3px, #d4d0c8 3px 4px); clip-path: polygon(100% 0, 100% 100%, 0 100%); }
```
FILE: app.js
```js
const $ = id => document.getElementById(id);
const tick = c => `<svg viewBox="0 0 9 8" shape-rendering="crispEdges"><path fill="${c}" d="M1 3h1v1h1v1h1v-1h1v-1h1v-1h1v-1h1v3h-1v1h-1v1h-1v1h-1v1h-1v-1h-1v-1h-1z"/></svg>`;

/* Static checkboxes */
document.querySelectorAll('.cb.on').forEach(e => e.innerHTML = tick('#000'));

/* Top toolbars: [width, items]; > arrow, | separator, ! pressed */
const svg = n => `<svg><use href="#${n}"/></svg>`;
const glyph = (t, g) => `<svg viewBox="0 0 18 18"><circle cx="9" cy="8.500" r="7" fill="${g ? 'none' : '#fff'}" stroke="${g ? '#888' : '#222'}"/><path stroke="${g ? '#888' : '#201870'}" stroke-width="2.500" d="M13 14l4 3"/>${t}</svg>`;
const special = {
  swatch: '<i class="swatch"></i>',
  z1: glyph('<path fill="#fff" stroke="#181870" stroke-width="1.500" d="M6 5h6v7H6z"/>'),
  z2: glyph('<text x="5.500" y="12.500" font-size="11" font-weight="bold">2</text>'),
  zh: glyph('<text x="3.500" y="12" font-size="10" font-weight="bold">½</text>'),
  zg: '<svg viewBox="0 0 18 18"><path fill="#aaa" stroke="#999" d="M5 11L2 8l1-1 3 1V3h2v3l1-4h2v4l2-3 2 1v8l-2 4H8z"/><path fill="#d4d0c8" stroke="#888" d="M8 7h5v5H8z"/></svg>',
  zr: glyph('<path fill="none" stroke="#888" d="M7 6h4v5H7z"/>', 1),
  prev: glyph('<path fill="#502090" d="M5 8.500l4-4v3h4v2H9v3z"/>'),
  next: glyph('<path fill="#888" d="M13 8.500l-4-4v3H5v2h4v3z"/>', 1)
};
const bars = [
  [60, 'open save'], [204, '!cursor pencil info zin zout hand ruler | noruler'],
  [164, '!swatch > gpen xpen redx bluesun rgbcur'], [152, 'z1 z2 zh zg zr fit'], [60, 'prev next'],
  [159, 'camera > !ir > | ychip three schem'], [83, 'down up top'], [1038, 'undo >> redo >> book nobook']
];
$('toolbars').innerHTML = bars.map(([w, items]) => `<div class="bar" style="width:${w}px"><div class="grip-v"></div>` +
  items.split(' ').map(t => {
    if (t === '>') return '<i class="arrow"></i>';
    if (t === '>>') return '<i class="arrow dis wide"></i>';
    if (t === '|') return '<i class="vsep"></i>';
    const p = t[0] === '!', n = p ? t.slice(1) : t;
    return `<div class="tool${p ? ' pressed' : ''}">${special[n] || svg(n)}</div>`;
  }).join('') + '</div>').join('');

/* Left edit toolbar */
$('side').innerHTML = '<div class="grip-h"></div>' +
  'lock unlock !redrect boxes | props move copy del | routes> stretch arch pull widthb widthr | rot>> blank>> shift pins net | group align> spread>>'
    .split(' ').map(t => {
      if (t === '|') return '<div class="hsep"></div>';
      const n = t.replace(/[!>]/g, '');
      const a = t.endsWith('>>') ? '<i class="arrow dis"></i>' : t.endsWith('>') ? '<i class="arrow"></i>' : '';
      return `<div class="st-row"><div class="tool${t[0] === '!' ? ' pressed' : ''}">${svg(n)}</div>${a}</div>`;
    }).join('') + '<div class="side-in">0</div>';

/* Object tree: name, expander, vis, sel, colour; sel 2 is a greyed tick */
const T = [
  ['Die Area', '', '', 0, 's#808080'], ['Core Area', '', 1, 0, 's#808080'], ['Port', '', 1, 1, 's#00ffff'], ['Terminal', '', 1, 0],
  ['Cell', '+', 1, 1], ['Pin', '+', 0, 2, 's#00ffff'], ['Pin Shape', '+', 0, 0], ['Site Row', '+', 0, 0, 's#ffa500'],
  ['Bound', '', 0, 2, 'd#ffff00'], ['Plan Group', '+', 1, 1, 'd#ff00ff'], ['Placement Bloc...', '+', 1, 1], ['Routing Blockage', '', 0, 2],
  ['Power Plan Region', '', 0, 2, 'd#3cb371'], ['RP Group', '', 0, 0, 'd#00ffff'], ['RP Keepout', '+', 0, 2], ['Voltage Area', '+', 0, 2, 'd#800080'],
  ['Pin Guide', '', 0, 2, 'd#00ffff'], ['Route Guide', '+', 0, 2], ['Routing Corridor', '', 0, 2, 's#f08080'], ['Global Route', '', 0, 0],
  ['Route', '-', 1, 1], ['>Shape', '', 1, 1], ['>Via', '', 1, 1], ['>Net Type', '+', '', ''], ['>Route Type', '+', '', ''],
  ['Track', '+', 0, 2], ['Fill Cell', '', 1, 0, 's#808080'], ['Via Region', '', 0, 2], ['MW Sys Objs', '', 1, 0],
  ['Edit Group', '', 1, 1, 'd#00ffff'], ['Text', '', 0, 0], ['Labels', '+', 1, '']
];
const box = v => v === '' ? '<span></span>' : `<i class="cb">${v ? tick(v === 2 ? '#808080' : '#000') : ''}</i>`;
$('tree').innerHTML = T.map(([n, e, v, s, c], i) =>
  `<div class="node${n[0] === '>' ? ' kid' : ''}${i === T.length - 1 ? ' last' : ''}"><span class="name">${n.replace('>', '')}</span>` +
  (e ? `<i class="exp${e === '+' ? ' plus' : ''}"></i>` : '') + box(v) + box(s) +
  (c ? `<i class="clr ${c[0] === 's' ? 'solid' : 'dash'}" style="--c:${c.slice(1)}"></i>` : '') + '</div>').join('');

/* Layer list */
$('layers').innerHTML = [['metal1 (8)', '#00ffff', 'dots'], ['via1 (17)', '#b0b0ff', 'check'], ['metal2 (18)', '#ffff00', 'dots'], ['via2 (27)', '#0000ff', ''],
  ['metal3 (28)', '#ff0000', 'check'], ['via3 (37)', '#ffff00', ''], ['metal4 (38)', '#008000', 'diag']]
  .map(([n, c, p]) => `<div class="layer"><i class="list-cb">${tick('#fff')}</i><i class="sw p-${p}" style="--c:${c}"></i>${n}</div>`).join('');

/* Voltage drop histogram */
const P = { R: '#fb0000', O: '#f98d00', Y: '#f3ef00', G: '#00ff00', C: '#06f5f5', T: '#009998', B: '#006eb2', D: '#0038a0', V: '#962dca', M: '#8b008b' };
const H = [[31.7, 'R', 543, 142], [28.5, 'O', 489, 127], [25.4, 'Y', 381, 99], [22.2, 'G', 173, 45], ['19.0', 'C', 92, 24], [15.8, 'T', 51, 14],
  [12.7, 'B', 25, 7], [9.5, 'D', 23, 6], [6.3, 'V', 13, 4], [3.2, 'M', 2, 2]];
const hatchX = '<svg width="20" height="20" viewBox="0 0 20 20"><path d="M0 0h20v20H0z"/><path fill="none" stroke="#d8d4f8" d="M.5.5h19v19H.5zM0 0l20 20M20 0L0 20M10 0l10 10-10 10L0 10z"/></svg>';
const stip = '<svg width="20" height="20" viewBox="0 0 20 20"><path fill="none" stroke="#000" stroke-dasharray="1 3" d="M2 2.500h18M4 4.500h16M2 6.500h18M4 8.500h16M2 10.500h18M4 12.500h16M2 14.500h18M4 16.500h16"/></svg>';
const hrow = (lab, c, n, w, cls, inner = '') => `<i class="cb">${tick('#fff')}</i><span class="edge ${cls}">${lab}</span><i class="sw" style="--c:${c}">${inner}</i><span class="n">${n}</span><i class="bar2" style="--c:${c};width:${w}px"></i>`;
$('hist').innerHTML = H.map(([l, c, n, w]) => hrow(l, P[c], n, w, '')).join('') + '<div class="gap"><div class="edge zero">0.0</div></div><div class="pads">' +
  hrow('Power switches', '#d8d4f8', 0, 1, 'lab', hatchX) + hrow('Real pads', '#d8d4f8', 0, 1, 'lab') +
  hrow('Synthesized', '#ff00ff', 0, 1, 'lab') + hrow('Virtual pads', '#d8d4f8', 1, 2, 'lab', stip) + '</div>';

/* Chip view, drawn in window coordinates */
const out = [];
const r = (x, y, w, h, f) => out.push(`<rect x="${x}" y="${y}" width="${w}" height="${h}" fill="${f}"/>`);
let seed = 7;
const rnd = () => (seed = (seed * 16807) % 2147483647) / 2147483647;
const teal = '#005454', plum = '#46294f', olive = '#545000', wine = '#600000';

r(625, 333, 513, 1, '#333'); r(625, 842, 513, 1, '#333'); r(625, 333, 1, 510, '#333'); r(1137, 333, 1, 510, '#333');
const tag = (x, y, one) => out.push(`<path fill="none" stroke="${teal}" d="M${x + .5} ${y + .5}h10v10h-10z${one ? `M${x + 4} ${y + 2.5}h3M${x + 5.5} ${y + 2}v7M${x + 4} ${y + 8.5}h3` : `M${x + 4} ${y + 2.5}h3M${x + 3.5} ${y + 3}v5M${x + 7.5} ${y + 3}v5M${x + 4} ${y + 8.5}h3`}"/>`);
[625, 725, 826, 926, 1027, 1127].forEach(x => { tag(x, 328); tag(x, 837); });
[333, 433, 533, 632, 732, 832].forEach((y, i) => { tag(620, y); tag(1132, y, i > 1); });

const stripY = [357, 378, 400, 423, 445, 468, 490, 511, 536, 558, 581, 603, 626, 648, 671, 693, 716, 738, 761, 783, 806, 829];
const rowY = [367, 390, 412, 435, 457, 480, 503, 525, 548, 570, 593, 615, 638, 661, 683, 706, 728, 751, 773, 796, 818];
/* cell boundaries, denser toward the middle of the core */
const cells = (y0, y1, d) => {
  for (let x = 648; x < 1113;) {
    r(x, y0, rnd() < .07 ? 2 : 1, y1 - y0, plum);
    x += 3 + Math.round(rnd() * rnd() * d + rnd() * 7);
  }
};
rowY.forEach((y, i) => {
  const edge = Math.min(i, rowY.length - 1 - i), d = [110, 90, 32, 26, 22][Math.min(edge, 4)];
  cells(stripY[i] + 2, y, d + 8); cells(y + 2, stripY[i + 1], d);
});
rowY.forEach((y, i) => {
  if (i % 2) { r(648, y, 475, 1, plum); r(648, y + 2, 475, 1, teal); }
  else { r(639, y, 484, 1, teal); r(648, y + 1, 465, 1, plum); r(639, y + 2, 484, 1, teal); }
});
[[642, 2], [646, 0], [807, 0], [804, 2], [962, 0], [959, 2], [1116, 0], [1120, 2]].forEach(([x, s]) => {
  r(x, 349, 1, 478, olive);
  if (s) for (let y = 350; y < 826; y += 4) r(x - 1, y, 1, 1, olive);
});
r(648, 349, 1, 478, '#30303a'); r(1113, 349, 1, 478, '#30303a');
rowY.forEach(y => [639, 1116].forEach(x => { r(x, y, 7, 1, olive); r(x, y + 2, 7, 1, olive); }));
[[348, 8], [507, 3], [660, 3], [820, 9]].forEach(([y, h]) => {
  r(639, y, 484, h, '#120000');
  r(639, y, 484, 1, wine); if (h > 4) r(639, y + 4, 484, 1, wine);
  r(639, y + h - 1, 484, 1, h > 4 ? wine : '#300000');
  for (let x = 641; x < 1122; x += 4) { r(x, y + 2, 1, 1, '#900000'); if (h > 4) r(x + 2, y + 6, 1, 1, '#900000'); }
});

/* vertical straps: x, width, start y, then colour/end pairs */
const vbar = (x, w, y, segs) => segs.forEach(([c, e]) => { r(x, y, w, e - y, P[c]); y = e; });
r(633, 337, 500, 10, P.R);
/* horizontal straps: y, height, start x, then colour / upper end / lower end */
const S = [
  [357, 2, 633, 'R'], [378, 4, 633, 'R'], [400, 4, 639, 'O 694 661 R'], [423, 4, 639, 'O 689 679 R'], [445, 4, 639, 'O 670 731 R'],
  [468, 4, 639, 'O 746 742 R'], [490, 4, 633, 'O 804 801 R'], [511, 6, 633, 'O 847 841 R'], [536, 3, 639, 'Y 670 697 O 873 861 R'],
  [558, 4, 639, 'Y 718 737 O 959 1003 R'], [581, 4, 633, 'G 633 657 Y 776 786 O'], [603, 4, 639, 'G 670 691 Y 811 834 O'],
  [626, 4, 639, 'G 731 741 Y 872 871 O'], [648, 4, 639, 'C 683 660 G 780 775 Y 937 896 O'], [665, 5, 633, 'G 804 804 Y 959 959 O'],
  [671, 4, 639, 'C 679 712 G 814 816 Y 959 959 O'], [693, 4, 639, 'T 661 661 C 772 756 G 846 845 Y 1018 1017 O'],
  [716, 4, 633, 'T 709 633 C 785 796 G 861 899 Y'], [738, 4, 633, 'B 680 696 T 746 751 C 817 812 G 916 915 Y'],
  [761, 4, 633, 'D 659 659 B 735 727 T 748 774 C 840 839 G 949 945 Y'], [783, 4, 633, 'D 659 633 B 707 633 T 775 790 C 839 829 G 961 986 Y'],
  [806, 4, 633, 'D 661 633 B 687 633 T 763 801 C 842 801 G 983 983 Y']
];
vbar(799, 5, 347, [['R', 490], ['O', 585], ['Y', 666], ['G', 740], ['C', 835]]);
vbar(954, 5, 347, [['R', 558], ['O', 666], ['Y', 783], ['G', 835]]);
S.forEach(([y, h, x, s]) => {
  const t = s.split(' ');
  let a = x, b = x;
  const hh = Math.floor(h / 2);
  for (let i = 0; i < t.length; i += 3) {
    const ea = +t[i + 1] || 1123, eb = +t[i + 2] || 1123;
    if (ea > a) r(a, y, ea - a, hh, P[t[i]]);
    if (eb > b) r(b, y + hh, eb - b, h - hh, P[t[i]]);
    a = Math.max(a, ea); b = Math.max(b, eb);
  }
});
r(804, 511, 150, 2, P.R);
r(799, 716, 5, 24, P.G); r(799, 740, 5, 89, P.C); r(954, 785, 5, 44, P.G);
vbar(629, 10, 337, [['O', 492], ['Y', 580], ['G', 627], ['C', 668], ['T', 697], ['B', 740], ['D', 763], ['V', 785], ['D', 839]]);
r(633, 829, 168, 10, P.T); r(801, 829, 158, 10, P.G); r(959, 829, 174, 10, P.Y);
vbar(1123, 10, 337, [['R', 558], ['O', 715], ['Y', 839]]);
S.forEach(([y, h, x, s]) => { if (x === 633) r(633, y, 6, h > 4 ? h : 2, P[s[0] === 'G' && y === 581 ? 'Y' : s[0]]); });
/* virtual pad marker */
r(619, 758, 12, 12, '#d8d4f8');
[[621, 762], [625, 760], [623, 764], [627, 762], [621, 766], [625, 764], [627, 766], [623, 760], [625, 768]].forEach(([x, y], i) => r(x, y, 1, 1, i % 2 ? '#900090' : '#202050'));
$('chip').innerHTML = out.join('');
```
